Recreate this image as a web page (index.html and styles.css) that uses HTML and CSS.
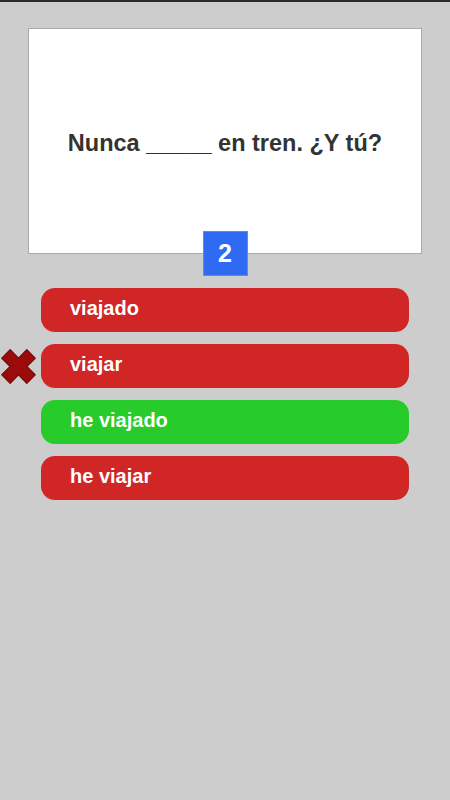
FILE: index.html
```
<!DOCTYPE html>
<html>
<head>
<meta charset="utf-8">
<link rel="stylesheet" href="styles.css">
</head>
<body>
<div class="topbar"></div>
<main class="screen">
  <section class="card">
    <p class="question">Nunca _____ en tren. ¿Y tú?</p>
  </section>
  <div class="badge-row"><div class="badge">2</div></div>
  <ul class="answers">
    <li class="answer wrong">viajado</li>
    <li class="answer wrong marked">
      <svg class="xmark" viewBox="0 0 40 40" width="37" height="37"><path d="M2 11 L11 2 L20 11 L29 2 L38 11 L29 20 L38 29 L29 38 L20 29 L11 38 L2 29 L11 20 Z" fill="#9c0b0b" stroke="#850808" stroke-width="1.5" stroke-linejoin="round"/></svg>
      viajar
    </li>
    <li class="answer right">he viajado</li>
    <li class="answer wrong">he viajar</li>
  </ul>
</main>
</body>
</html>
```
FILE: styles.css
```
html, body {
  margin: 0;
  padding: 0;
}
body {
  width: 450px;
  height: 800px;
  background: #cdcdcd;
  font-family: "Liberation Sans", Arial, sans-serif;
  overflow: hidden;
}
.topbar {
  height: 2px;
  background: #2a2a2a;
}
.screen {
  display: flex;
  flex-direction: column;
  padding: 26px 0 0 0;
}
.card {
  margin: 0 28px;
  height: 224px;
  background: #ffffff;
  border: 1px solid #a9a9a9;
  display: flex;
  align-items: center;
  justify-content: center;
}
.question {
  margin: 4px 0 0 0;
  font-size: 23.5px;
  font-weight: bold;
  color: #333333;
}
.badge-row {
  display: flex;
  justify-content: center;
  margin-top: -23px;
}
.badge {
  width: 45px;
  height: 45px;
  background: #2f6af2;
  color: #ffffff;
  font-size: 25px;
  font-weight: bold;
  display: flex;
  align-items: center;
  justify-content: center;
  border: 1px solid #5b8af0;
  box-sizing: border-box;
}
.answers {
  list-style: none;
  margin: 12px 0 0 0;
  padding: 0 41px;
  display: flex;
  flex-direction: column;
  gap: 12px;
}
.answer {
  position: relative;
  height: 44px;
  border-radius: 14px;
  color: #ffffff;
  font-size: 20px;
  font-weight: bold;
  display: flex;
  align-items: center;
  padding-left: 29px;
  padding-bottom: 3px;
  box-sizing: border-box;
}
.wrong {
  background: #d02626;
}
.right {
  background: #27cc2a;
}
.xmark {
  position: absolute;
  left: -41px;
  top: 4px;
}
```
